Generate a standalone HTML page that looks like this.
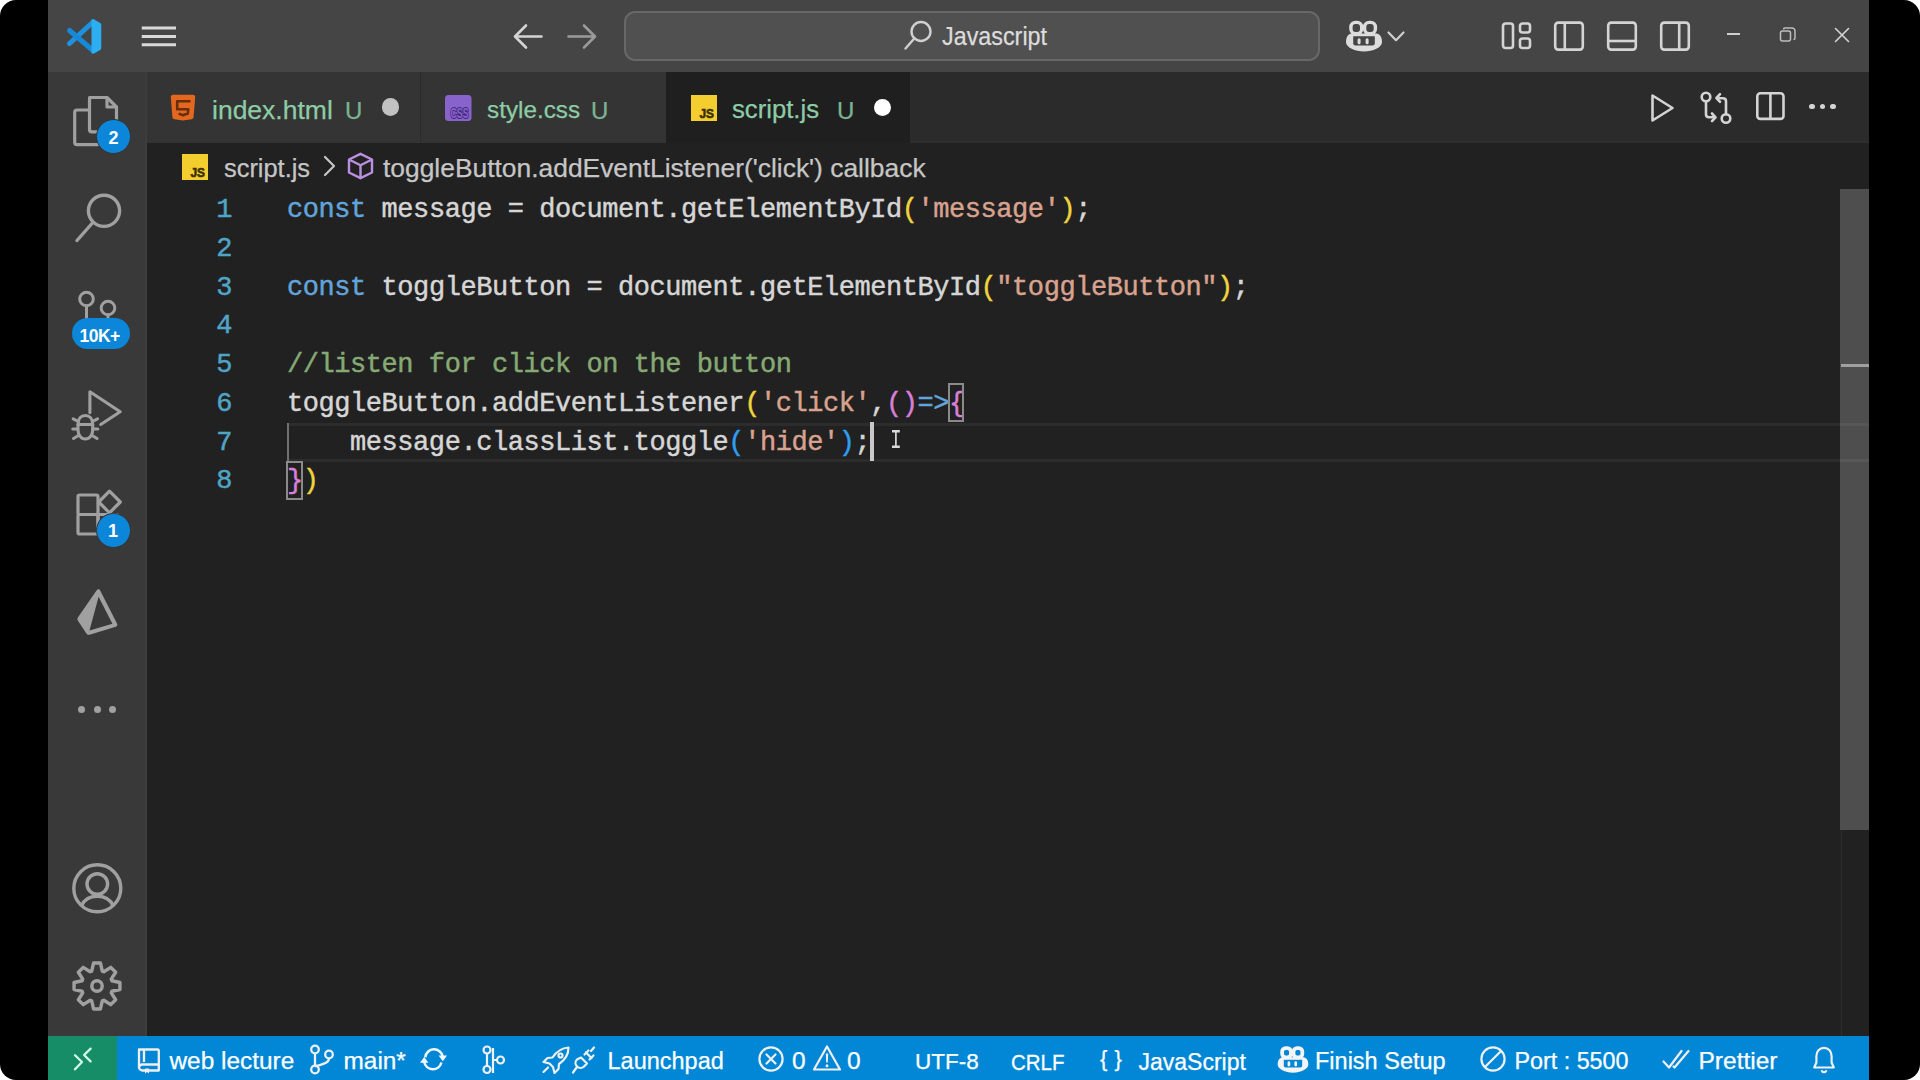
<!DOCTYPE html><html><head><meta charset="utf-8"><style>
*{margin:0;padding:0;box-sizing:border-box}
html,body{width:1920px;height:1080px;overflow:hidden;background:#fff}
body{position:relative;font-family:"Liberation Sans",sans-serif}
.frame{position:absolute;left:0;top:0;width:1920px;height:1080px;background:#000;border-radius:16px;overflow:hidden}
.abs{position:absolute}
.t{position:absolute;white-space:pre;line-height:1}
svg{position:absolute;overflow:visible}
#title{left:48px;top:0;width:1821px;height:72px;background:#454545}
#act{left:48px;top:72px;width:99px;height:964px;background:#393939;border-right:2px solid #3d3d3d}
#tabs{left:147px;top:72px;width:1722px;height:71px;background:#2b2b2b}
#crumb{left:147px;top:143px;width:1722px;height:46px;background:#212121}
#editor{left:147px;top:189px;width:1722px;height:847px;background:#212121}
#status{left:48px;top:1036px;width:1821px;height:44px;background:#0287d6}
#remote{left:48px;top:1036px;width:69px;height:44px;background:#178d67}
.mono{font-family:"Liberation Mono",monospace;font-size:27px;letter-spacing:-0.44px;-webkit-text-stroke:0.45px currentColor}
.ln{position:absolute;left:147px;width:85px;text-align:right;color:#50a5c6;white-space:pre;line-height:38.75px;height:38.75px}
.cl{position:absolute;left:287px;color:#d6d6d6;white-space:pre;line-height:38.75px;height:38.75px}
.kw{color:#62a4dc}.str{color:#d9a28f}.cm{color:#86aa74}.y{color:#f0d43e}.p{color:#d87fd8}.b{color:#2f9ef0}
</style></head><body><div class="frame"><div id="title" class="abs"></div><div id="act" class="abs"></div><div id="tabs" class="abs"></div><div id="crumb" class="abs"></div><div id="editor" class="abs"></div><div id="status" class="abs"></div><div id="remote" class="abs"></div><svg style="left:60px;top:14px" width="46" height="44" viewBox="60 14 46 44"><g stroke-linecap="round"><line x1="69.5" y1="43.5" x2="93" y2="22" stroke="#1d93e0" stroke-width="5"/><line x1="69.5" y1="30.5" x2="93" y2="50.5" stroke="#168ad8" stroke-width="5"/></g><path fill="#2eaef2" d="M91.5 19.8c1-.6 2-.6 3 0l5.3 3c.9.5 1.5 1.3 1.5 2.4v22.6c0 1.1-.6 1.9-1.5 2.4l-5.3 3c-1 .6-2 .6-3 0z"/></svg><svg style="left:141px;top:26px" width="36" height="22" viewBox="0 0 36 22"><g stroke="#d9d9d9" stroke-width="3"><line x1="0.75" y1="2.1" x2="35" y2="2.1"/><line x1="0.75" y1="10.5" x2="35" y2="10.5"/><line x1="0.75" y1="18.8" x2="35" y2="18.8"/></g></svg><svg style="left:512px;top:23px" width="32" height="28" viewBox="0 0 32 28"><g fill="none" stroke="#d4d4d4" stroke-width="2.6" stroke-linecap="round" stroke-linejoin="round"><path d="M14 2.5 3 13.5 14 24.5M3.5 13.5h26"/></g></svg><svg style="left:566px;top:23px" width="32" height="28" viewBox="0 0 32 28"><g fill="none" stroke="#9a9a9a" stroke-width="2.6" stroke-linecap="round" stroke-linejoin="round"><path d="M18 2.5 29 13.5 18 24.5M28.5 13.5h-26"/></g></svg><div class="abs" style="left:624px;top:10.8px;width:696px;height:50px;border-radius:11px;background:#505050;border:2px solid #686868"></div><svg style="left:903px;top:20px" width="30" height="31" viewBox="0 0 30 31"><g fill="none" stroke="#d0d0d0" stroke-width="2.4" stroke-linecap="round"><circle cx="18" cy="11.5" r="9.5"/><path d="M11.3 18.5 2.5 28.5"/></g></svg><div class="t" style="left:942px;top:24.41px;font-size:25.5px;color:#dcdcdc;font-family:'Liberation Sans',sans-serif;letter-spacing:0px;transform:scaleX(0.915);transform-origin:0 0;-webkit-text-stroke:0.25px #dcdcdc;">Javascript</div><svg style="left:1344px;top:18px" width="40" height="36" viewBox="0 0 40 36"><path fill="#dcdcdc" d="M2 24C2 19 4 16.5 7 15.5H33C36 16.5 38 19 38 24C38 29.5 29 33.5 20 33.5S2 29.5 2 24Z"/><path fill="#454545" d="M9.2 18.2H30.8V25.5C30.8 26.8 29.8 27.5 28.5 27.5H11.5C10.2 27.5 9.2 26.8 9.2 25.5Z"/><g fill="none" stroke="#dcdcdc" stroke-width="3.4"><rect x="6.9" y="4.4" width="10.8" height="11.2" rx="4.6"/><rect x="20.6" y="4.4" width="10.8" height="11.2" rx="4.6"/></g><g fill="#dcdcdc"><rect x="13.6" y="20.2" width="3" height="6" rx="1.5"/><rect x="21.6" y="20.2" width="3" height="6" rx="1.5"/></g></svg><svg style="left:1386px;top:30px" width="20" height="14" viewBox="0 0 20 14"><path d="M2.5 2.5l7.5 7.7 7.5-7.7" fill="none" stroke="#cfcfcf" stroke-width="2.2" stroke-linecap="round" stroke-linejoin="round"/></svg><svg style="left:1501px;top:21px" width="32" height="30" viewBox="0 0 32 30"><g fill="none" stroke="#d4d4d4" stroke-width="2.6" stroke-linejoin="round"><rect x="2" y="2.5" width="10" height="24.5" rx="2.5"/><rect x="19" y="2.5" width="10" height="9" rx="2.5"/><rect x="19" y="17.5" width="10" height="9.5" rx="2.5"/></g></svg><svg style="left:1552px;top:20px" width="34" height="32" viewBox="0 0 34 32"><g fill="none" stroke="#d4d4d4" stroke-width="2.6"><rect x="3.2" y="2.6" width="27.6" height="27" rx="3"/><line x1="12.8" y1="2.6" x2="12.8" y2="29.6"/></g></svg><svg style="left:1605px;top:20px" width="34" height="32" viewBox="0 0 34 32"><g fill="none" stroke="#d4d4d4" stroke-width="2.6"><rect x="3.2" y="2.6" width="27.6" height="27" rx="3"/><line x1="3.2" y1="21" x2="30.8" y2="21"/></g></svg><svg style="left:1658px;top:20px" width="34" height="32" viewBox="0 0 34 32"><g fill="none" stroke="#d4d4d4" stroke-width="2.6"><rect x="3.2" y="2.6" width="27.6" height="27" rx="3"/><line x1="21.2" y1="2.6" x2="21.2" y2="29.6"/></g></svg><div class="abs" style="left:1727px;top:33px;width:13px;height:1.6px;background:#cfcfcf"></div><svg style="left:1779px;top:27px" width="18" height="16" viewBox="0 0 18 16"><g fill="none" stroke="#bdbdbd" stroke-width="1.5"><rect x="1.5" y="4" width="10" height="10" rx="2"/><path d="M4.5 2.5c0-1 .6-1.5 1.5-1.5h7c1.6 0 3 1.4 3 3v7c0 .9-.5 1.5-1.5 1.5"/></g></svg><svg style="left:1834px;top:27px" width="16" height="16" viewBox="0 0 16 16"><g stroke="#d4d4d4" stroke-width="1.6" stroke-linecap="round"><line x1="1.5" y1="1.5" x2="14.5" y2="14.5"/><line x1="14.5" y1="1.5" x2="1.5" y2="14.5"/></g></svg><div class="abs" style="left:147px;top:72px;width:273px;height:71px;background:#343434"></div><div class="abs" style="left:420px;top:72px;width:246px;height:71px;background:#343434;border-left:1.5px solid #2c2c2c"></div><div class="abs" style="left:666px;top:72px;width:244px;height:71px;background:#1f1f1f"></div><div class="abs" style="left:910px;top:141px;width:959px;height:2px;background:#2e2e2e"></div><svg style="left:170px;top:93.5px" width="26" height="27" viewBox="0 0 26 27"><path fill="#e2681f" d="M3 .8h20c1.4 0 2.3 1 2.2 2.3L23.6 23c-.1 1.2-.9 2-2 2.3L13 26.5l-8.6-1.2c-1.1-.3-1.9-1.1-2-2.3L.8 3.1C.7 1.8 1.6.8 3 .8z"/><path fill="none" stroke="#6a2c0c" stroke-width="2.6" stroke-linejoin="round" d="M20.5 7.3H7.2V15.3H18.3L17.8 19.6 13 21.3 8.6 19.6"/></svg><div class="t" style="left:212px;top:96.57px;font-size:26.5px;color:#8ccca6;font-family:'Liberation Sans',sans-serif;letter-spacing:0px;-webkit-text-stroke:0.25px #8ccca6;">index.html</div><div class="t" style="left:345px;top:98.68px;font-size:24px;color:#7cb391;font-family:'Liberation Sans',sans-serif;letter-spacing:0px;-webkit-text-stroke:0.25px #7cb391;">U</div><div class="abs" style="left:381.5px;top:98px;width:17.5px;height:17.5px;border-radius:50%;background:#c2c2c2"></div><svg style="left:445px;top:94.5px" width="27" height="26" viewBox="0 0 27 26"><rect x="0" y="0" width="26.5" height="26" rx="3.5" fill="#8963cc"/><text x="5.5" y="22.5" font-family="Liberation Sans" font-size="14.5" font-weight="bold" fill="#8963cc" stroke="#452a7e" stroke-width="2.2" paint-order="stroke" textLength="18" lengthAdjust="spacingAndGlyphs">CSS</text></svg><div class="t" style="left:487px;top:98.43px;font-size:24.3px;color:#8ccca6;font-family:'Liberation Sans',sans-serif;letter-spacing:0px;-webkit-text-stroke:0.25px #8ccca6;">style.css</div><div class="t" style="left:591px;top:98.68px;font-size:24px;color:#7cb391;font-family:'Liberation Sans',sans-serif;letter-spacing:0px;-webkit-text-stroke:0.25px #7cb391;">U</div><svg style="left:691px;top:94.5px" width="26" height="26" viewBox="0 0 26 26"><rect width="26" height="26" fill="#f4cd2e"/><text x="8.5" y="22.6" font-family="Liberation Sans" font-size="13" font-weight="bold" fill="#3a3000" stroke="#3a3000" stroke-width="0.6" textLength="14.5" lengthAdjust="spacingAndGlyphs">JS</text></svg><div class="t" style="left:732px;top:97.24px;font-size:25.7px;color:#8ccca6;font-family:'Liberation Sans',sans-serif;letter-spacing:0px;-webkit-text-stroke:0.25px #8ccca6;">script.js</div><div class="t" style="left:837px;top:98.68px;font-size:24px;color:#7cb391;font-family:'Liberation Sans',sans-serif;letter-spacing:0px;-webkit-text-stroke:0.25px #7cb391;">U</div><div class="abs" style="left:873.5px;top:98.5px;width:17.5px;height:17.5px;border-radius:50%;background:#ffffff"></div><svg style="left:1650px;top:93px" width="26" height="30" viewBox="0 0 26 30"><path d="M2.5 2.5v25l20-12.5z" fill="none" stroke="#d4d4d4" stroke-width="2.6" stroke-linejoin="round"/></svg><svg style="left:1700px;top:91px" width="33" height="34" viewBox="0 0 33 34"><g fill="none" stroke="#d4d4d4" stroke-width="2.6" stroke-linecap="round" stroke-linejoin="round"><circle cx="6" cy="6" r="4.3"/><circle cx="26" cy="27.5" r="4.3"/><path d="M6 10.3v13c0 2 1 3 3 3h6"/><path d="M12 22.5l3.5 3.8-3.5 3.8"/><path d="M26 23.2v-13c0-2-1-3-3-3h-6"/><path d="M20 3.2l-3.5 3.8 3.5 3.8"/></g></svg><svg style="left:1756px;top:92px" width="29" height="29" viewBox="0 0 29 29"><g fill="none" stroke="#d4d4d4" stroke-width="2.6"><rect x="1.3" y="1.3" width="26.2" height="25.6" rx="3"/><line x1="14.4" y1="1.3" x2="14.4" y2="27"/></g></svg><div class="abs" style="left:1809.4px;top:104.2px;width:5.2px;height:5.2px;border-radius:50%;background:#d4d4d4"></div><div class="abs" style="left:1819.9px;top:104.2px;width:5.2px;height:5.2px;border-radius:50%;background:#d4d4d4"></div><div class="abs" style="left:1830.4px;top:104.2px;width:5.2px;height:5.2px;border-radius:50%;background:#d4d4d4"></div><svg style="left:182px;top:153.5px" width="26" height="26" viewBox="0 0 26 26"><rect width="26" height="26" fill="#f4cd2e"/><text x="8.5" y="22.6" font-family="Liberation Sans" font-size="13" font-weight="bold" fill="#3a3000" stroke="#3a3000" stroke-width="0.6" textLength="14.5" lengthAdjust="spacingAndGlyphs">JS</text></svg><div class="t" style="left:224px;top:155.50px;font-size:25.4px;color:#c6c6c6;font-family:'Liberation Sans',sans-serif;letter-spacing:0px;-webkit-text-stroke:0.25px #c6c6c6;">script.js</div><svg style="left:321.5px;top:153.5px" width="16" height="24" viewBox="0 0 16 24"><path d="M3 3l9 9-9 9" fill="none" stroke="#c6c6c6" stroke-width="2.2" stroke-linecap="round" stroke-linejoin="round"/></svg><svg style="left:347px;top:152px" width="27" height="28" viewBox="0 0 27 28"><g fill="none" stroke="#bb90e2" stroke-width="2.4" stroke-linejoin="round"><path d="M13.5 1.8 25 7.5v13L13.5 26.2 2 20.5v-13z"/><path d="M2 7.5l11.5 5.8L25 7.5M13.5 13.3v12.9"/></g></svg><div class="t" style="left:383px;top:154.65px;font-size:26.4px;color:#c6c6c6;font-family:'Liberation Sans',sans-serif;letter-spacing:0px;-webkit-text-stroke:0.25px #c6c6c6;">toggleButton.addEventListener(&#x27;click&#x27;) callback</div><svg style="left:66px;top:88px" width="60" height="64" viewBox="0 0 60 64"><g fill="none" stroke="#a0a0a0" stroke-width="3.2" stroke-linejoin="round"><path d="M23.5 9.5h17.5l9.5 9.5v22.5c0 1.4-1 2.3-2.3 2.3H25.8c-1.4 0-2.3-1-2.3-2.3V11.8c0-1.4 1-2.3 2.3-2.3z"/><path d="M41 9.5V19h9.5"/><path d="M23.5 22H11c-1.4 0-2.3 1-2.3 2.3v30c0 1.4 1 2.3 2.3 2.3h20c1.4 0 2.3-1 2.3-2.3V44"/></g></svg><div class="abs" style="left:96px;top:119.2px;width:35px;height:35px;border-radius:50%;background:#0c86d8;border:1.6px solid #333333"></div><div class="t" style="left:108.5px;top:129.26px;font-size:18px;color:#ffffff;font-family:'Liberation Sans',sans-serif;letter-spacing:0px;font-weight:bold">2</div><svg style="left:72px;top:188px" width="52" height="58" viewBox="0 0 52 58"><g fill="none" stroke="#a0a0a0" stroke-width="3.4" stroke-linecap="round"><circle cx="32" cy="22.8" r="15.6"/><path d="M20.8 34.5 5 52.5"/></g></svg><svg style="left:74px;top:288px" width="46" height="36" viewBox="0 0 46 36"><g fill="none" stroke="#a0a0a0" stroke-width="3" stroke-linecap="round"><circle cx="12.5" cy="11" r="6.8"/><circle cx="34" cy="20" r="6.8"/><path d="M12.5 17.8V34"/><path d="M34 26.8V34"/></g></svg><div class="abs" style="left:71.5px;top:317.5px;width:58px;height:31.5px;border-radius:16px;background:#0c86d8"></div><div class="t" style="left:79.5px;top:327.69px;font-size:17.5px;color:#ffffff;font-family:'Liberation Sans',sans-serif;letter-spacing:-0.5px;font-weight:bold">10K+</div><svg style="left:66px;top:384px" width="60" height="60" viewBox="0 0 60 60"><g fill="none" stroke="#a0a0a0" stroke-width="3.1" stroke-linecap="round" stroke-linejoin="round"><path d="M23.9 28.6V7.8L54.2 27.8 34.7 40.5"/><path d="M12 40.5C12 34.5 15 31.5 19.3 31.5S26.7 34.5 26.7 40.5V46C26.7 51 23.5 55 19.3 55S12 51 12 46Z"/><path d="M12 40.5H26.7"/><path d="M12.3 37.5 7.2 34.8M11.8 45H6.8M12.5 51.5 7.5 54.5M26.4 37.5l5.1-2.7M26.8 45h5M26.1 51.5l5 3"/></g></svg><svg style="left:74px;top:488px" width="48" height="50" viewBox="0 0 48 50"><g fill="none" stroke="#a0a0a0" stroke-width="3.2" stroke-linejoin="round"><rect x="4" y="7" width="20" height="19.5" rx="1.5"/><rect x="4" y="26.5" width="20" height="19.5" rx="1.5"/><rect x="24" y="26.5" width="20" height="19.5" rx="1.5"/><path d="M35.5 3.2l10.8 10.8-10.8 10.8-10.8-10.8z"/></g></svg><div class="abs" style="left:96px;top:512.5px;width:35px;height:35px;border-radius:50%;background:#0c86d8;border:1.6px solid #333333"></div><div class="t" style="left:108px;top:522.26px;font-size:18px;color:#ffffff;font-family:'Liberation Sans',sans-serif;letter-spacing:0px;font-weight:bold">1</div><svg style="left:74px;top:588px" width="48" height="52" viewBox="0 0 48 52"><path fill="#a0a0a0" d="M22.5 2.5c1-1.6 3-1.5 3.8.2l16.8 33c.6 1.2 0 2.7-1.3 3.1L15.6 46.7c-1.3.4-2.6-.2-3.2-1.3L3.8 32.6c-.6-1-.5-2.2.1-3.1zM24.6 8.8 15.5 42.5l22.9-6.8z" fill-rule="evenodd"/></svg><div class="abs" style="left:78.3px;top:706.3px;width:7px;height:7px;border-radius:50%;background:#a0a0a0"></div><div class="abs" style="left:93.7px;top:706.3px;width:7px;height:7px;border-radius:50%;background:#a0a0a0"></div><div class="abs" style="left:109.1px;top:706.3px;width:7px;height:7px;border-radius:50%;background:#a0a0a0"></div><svg style="left:70px;top:861px" width="54" height="54" viewBox="0 0 54 54"><g fill="none" stroke="#a0a0a0" stroke-width="3.4"><circle cx="27.3" cy="27.3" r="23.5"/><circle cx="27.3" cy="23" r="10.3"/><path d="M11.5 45c2.5-6.5 8.5-9.8 15.8-9.8s13.3 3.3 15.8 9.8"/></g></svg><svg style="left:70px;top:959px" width="54" height="54" viewBox="0 0 54 54"><g fill="none" stroke="#a0a0a0" stroke-width="3.4" stroke-linejoin="round"><path d="M21.73 12.10 L23.53 4.06 L30.47 4.06 L32.27 12.10 L33.81 12.74 L40.77 8.33 L45.67 13.23 L41.26 20.19 L41.90 21.73 L49.94 23.53 L49.94 30.47 L41.90 32.27 L41.26 33.81 L45.67 40.77 L40.77 45.67 L33.81 41.26 L32.27 41.90 L30.47 49.94 L23.53 49.94 L21.73 41.90 L20.19 41.26 L13.23 45.67 L8.33 40.77 L12.74 33.81 L12.10 32.27 L4.06 30.47 L4.06 23.53 L12.10 21.73 L12.74 20.19 L8.33 13.23 L13.23 8.33 L20.19 12.74Z"/><circle cx="27" cy="27" r="5.2"/></g></svg><svg style="left:71px;top:1046px" width="24" height="26" viewBox="0 0 24 26"><g fill="none" stroke="#d2fbe6" stroke-width="2.3" stroke-linecap="round" stroke-linejoin="round"><path d="M4 9.2l7 6.8-7 7.3"/><path d="M19.6 2.6l-6.5 6.4 6.5 6.4"/></g></svg><svg style="left:136px;top:1047px" width="26" height="28" viewBox="0 0 26 28"><g fill="none" stroke="#f0f0f0" stroke-width="2.3" stroke-linejoin="round"><path d="M3 2.5h18.5c.8 0 1.3.5 1.3 1.3V23.5H6.5c-1.8 0-3.5-1.5-3.5-3.3z"/><path d="M3 20.5c0-1.7 1.5-3 3.2-3h16.6"/><path d="M8 3v12"/></g><path d="M9 21.5v5l2-1.5 2 1.5v-5" fill="#f0f0f0"/></svg><div class="t" style="left:169.5px;top:1049.35px;font-size:24.4px;color:#ffffff;font-family:'Liberation Sans',sans-serif;letter-spacing:0px;-webkit-text-stroke:0.25px #ffffff;">web lecture</div><svg style="left:309px;top:1044px" width="26" height="31" viewBox="0 0 26 31"><g fill="none" stroke="#f0f0f0" stroke-width="2.3"><circle cx="6" cy="5.5" r="3.8"/><circle cx="6" cy="25.5" r="3.8"/><circle cx="20" cy="10.5" r="3.8"/><path d="M6 9.3v12.4M20 14.3c0 5-6 5.5-14 8.2"/></g></svg><div class="t" style="left:343.5px;top:1049.35px;font-size:24.4px;color:#ffffff;font-family:'Liberation Sans',sans-serif;letter-spacing:0px;-webkit-text-stroke:0.25px #ffffff;">main*</div><svg style="left:417px;top:1046px" width="32" height="28" viewBox="0 0 32 28"><g fill="none" stroke="#f0f8ff" stroke-width="2.5"><path d="M8.3 11.3A8.8 8.8 0 0 1 25.7 10.5"/><path d="M24.4 16.5A8.8 8.8 0 0 1 7.2 16"/></g><g fill="#f0f8ff"><path d="M21.6 9.4h8.4l-4.2 5.8z"/><path d="M3 16.8h8.4L7.2 11z"/></g></svg><svg style="left:481px;top:1045px" width="26" height="30" viewBox="0 0 26 30"><g fill="none" stroke="#f0f0f0" stroke-width="2.2"><circle cx="6" cy="5" r="3.5"/><circle cx="6" cy="24.5" r="3.5"/><circle cx="19.5" cy="15" r="3.5"/><path d="M6 8.5v12.5M12 3v25M16 15h-4"/></g></svg><svg style="left:541px;top:1045px" width="30" height="30" viewBox="0 0 30 30"><g fill="none" stroke="#f0f0f0" stroke-width="2.2" stroke-linejoin="round" stroke-linecap="round"><path d="M27.5 2.5c-7 .5-12 4-16 10l-5 .5-4 4 6 1.5 3.5 3.5 1.5 6 4-4 .5-5c6-4 9.5-9 9.5-16.5z"/><circle cx="19.5" cy="10.5" r="2"/><path d="M7 22.5l-4.5 4.5"/></g></svg><svg style="left:571px;top:1045px" width="28" height="30" viewBox="0 0 28 30"><g fill="none" stroke="#f0f0f0" stroke-width="2.2" stroke-linecap="round" stroke-linejoin="round"><path d="M10 12.5l6 6-3 3c-2 2-5 2-7 0s-2-5 0-7z"/><path d="M6 22L2 27.5"/><path d="M13.5 9.5l4-4M18.5 14.5l4-4"/><path d="M15 7.5l5.5 5.5"/><path d="M20 6l3-3.5"/></g></svg><div class="t" style="left:607.5px;top:1050.11px;font-size:23.5px;color:#ffffff;font-family:'Liberation Sans',sans-serif;letter-spacing:0px;-webkit-text-stroke:0.25px #ffffff;">Launchpad</div><svg style="left:757px;top:1045px" width="28" height="28" viewBox="0 0 28 28"><g fill="none" stroke="#f0f0f0" stroke-width="2.2" stroke-linecap="round"><circle cx="14" cy="14" r="11.6"/><path d="M9.5 9.5l9 9M18.5 9.5l-9 9"/></g></svg><div class="t" style="left:792px;top:1049.26px;font-size:24.5px;color:#ffffff;font-family:'Liberation Sans',sans-serif;letter-spacing:0px;-webkit-text-stroke:0.25px #ffffff;">0</div><svg style="left:812px;top:1044px" width="30" height="28" viewBox="0 0 30 28"><g fill="none" stroke="#f0f0f0" stroke-width="2.2" stroke-linejoin="round"><path d="M15 2.5 28 25.5H2z"/></g><path d="M13.8 9.5h2.4l-.4 9h-1.6z M15 20.2a1.5 1.5 0 1 1 0 3 1.5 1.5 0 0 1 0-3z" fill="#f0f0f0"/></svg><div class="t" style="left:847px;top:1049.26px;font-size:24.5px;color:#ffffff;font-family:'Liberation Sans',sans-serif;letter-spacing:0px;-webkit-text-stroke:0.25px #ffffff;">0</div><div class="t" style="left:915px;top:1050.95px;font-size:22.5px;color:#ffffff;font-family:'Liberation Sans',sans-serif;letter-spacing:0px;-webkit-text-stroke:0.25px #ffffff;">UTF-8</div><div class="t" style="left:1011px;top:1052.65px;font-size:20.5px;color:#ffffff;font-family:'Liberation Sans',sans-serif;letter-spacing:0px;-webkit-text-stroke:0.25px #ffffff;transform:scaleY(1.1);transform-origin:0 100%">CRLF</div><div class="t" style="left:1100px;top:1047.88px;font-size:22px;color:#ffffff;font-family:'Liberation Sans',sans-serif;letter-spacing:0.5px;-webkit-text-stroke:0.25px #ffffff;">{ }</div><div class="t" style="left:1138.5px;top:1050.53px;font-size:23.0px;color:#ffffff;font-family:'Liberation Sans',sans-serif;letter-spacing:0px;-webkit-text-stroke:0.25px #ffffff;">JavaScript</div><svg style="left:1276px;top:1044px" width="34" height="31" viewBox="0 0 40 36"><path fill="#f4f4f4" d="M2 24C2 19 4 16.5 7 15.5H33C36 16.5 38 19 38 24C38 29.5 29 33.5 20 33.5S2 29.5 2 24Z"/><path fill="#0287d6" d="M9.2 18.2H30.8V25.5C30.8 26.8 29.8 27.5 28.5 27.5H11.5C10.2 27.5 9.2 26.8 9.2 25.5Z"/><g fill="none" stroke="#f4f4f4" stroke-width="4.4"><rect x="7.2" y="4.6" width="10.4" height="10.8" rx="4.2"/><rect x="20.6" y="4.6" width="10.4" height="10.8" rx="4.2"/></g><g fill="#f4f4f4"><rect x="13.6" y="20.2" width="3.2" height="6" rx="1.6"/><rect x="21.6" y="20.2" width="3.2" height="6" rx="1.6"/></g></svg><div class="t" style="left:1315px;top:1050.11px;font-size:23.5px;color:#ffffff;font-family:'Liberation Sans',sans-serif;letter-spacing:0px;-webkit-text-stroke:0.25px #ffffff;">Finish Setup</div><svg style="left:1479px;top:1045px" width="28" height="28" viewBox="0 0 28 28"><g fill="none" stroke="#f0f0f0" stroke-width="2.2" stroke-linecap="round"><circle cx="14" cy="14" r="11.6"/><path d="M21.8 6.2 6.2 21.8"/></g></svg><div class="t" style="left:1514.5px;top:1050.28px;font-size:23.3px;color:#ffffff;font-family:'Liberation Sans',sans-serif;letter-spacing:0px;-webkit-text-stroke:0.25px #ffffff;">Port : 5500</div><svg style="left:1661px;top:1048px" width="30" height="24" viewBox="0 0 30 24"><g fill="none" stroke="#f0f0f0" stroke-width="2.2" stroke-linecap="round" stroke-linejoin="round"><path d="M2.5 13.5 8 19.5 20.5 3"/><path d="M12.5 18.5l1 1L27.5 3"/></g></svg><div class="t" style="left:1698.5px;top:1049.26px;font-size:24.5px;color:#ffffff;font-family:'Liberation Sans',sans-serif;letter-spacing:0px;-webkit-text-stroke:0.25px #ffffff;">Prettier</div><svg style="left:1811px;top:1045px" width="26" height="30" viewBox="0 0 26 30"><g fill="none" stroke="#f0f0f0" stroke-width="2.2" stroke-linejoin="round"><path d="M13 2.8c-4.6 0-7.6 3.6-7.6 8.2v6.5L3.2 22.5h19.6l-2.2-5V11c0-4.6-3-8.2-7.6-8.2z"/><path d="M10.5 25.2c.4 1.3 1.3 2 2.5 2s2.1-.7 2.5-2"/></g></svg><div class="abs" style="left:1840px;top:189px;width:29px;height:641px;background:#4e4e4e"></div><div class="abs" style="left:1841px;top:364px;width:28px;height:2.5px;background:#a0a0a0"></div><div class="abs" style="left:1841px;top:830px;width:1.2px;height:206px;background:#2e2e2e"></div><div class="abs" style="left:287px;top:423.00px;width:1582px;height:38.75px;border-top:3px solid rgba(255,255,255,0.05);border-bottom:3px solid rgba(255,255,255,0.05)"></div><div class="ln mono" style="top:191.00px">1</div><div class="cl mono" style="top:191.00px"><span class="kw">const</span> message = document.getElementById<span class="y">(</span><span class="str">'message'</span><span class="y">)</span>;</div><div class="ln mono" style="top:229.75px">2</div><div class="cl mono" style="top:229.75px"></div><div class="ln mono" style="top:268.50px">3</div><div class="cl mono" style="top:268.50px"><span class="kw">const</span> toggleButton = document.getElementById<span class="y">(</span><span class="str">"toggleButton"</span><span class="y">)</span>;</div><div class="ln mono" style="top:307.25px">4</div><div class="cl mono" style="top:307.25px"></div><div class="ln mono" style="top:346.00px">5</div><div class="cl mono" style="top:346.00px"><span class="cm">//listen for click on the button</span></div><div class="ln mono" style="top:384.75px">6</div><div class="cl mono" style="top:384.75px">toggleButton.addEventListener<span class="y">(</span><span class="str">'click'</span>,<span class="p">()</span><span class="kw">=&gt;</span><span class="p">{</span></div><div class="ln mono" style="top:423.50px">7</div><div class="cl mono" style="top:423.50px">    message.classList.toggle<span class="b">(</span><span class="str">'hide'</span><span class="b">)</span>;</div><div class="ln mono" style="top:462.25px">8</div><div class="cl mono" style="top:462.25px"><span class="p">}</span><span class="y">)</span></div><div class="abs" style="left:286.5px;top:422.50px;width:2px;height:39.75px;background:#707070"></div><div class="abs" style="left:286px;top:461.25px;width:16.5px;height:38.5px;border:2px solid #8a8a8a"></div><div class="abs" style="left:947.5px;top:383.00px;width:16.5px;height:38.6px;border:2px solid #8a8a8a"></div><div class="abs" style="left:870px;top:422.00px;width:4px;height:39px;background:#c8c8c8"></div><svg style="left:890px;top:429px" width="12" height="20" viewBox="0 0 12 20"><g fill="none" stroke="#dadada"><path stroke-width="2.4" d="M2 2.2h7.8M2 17.8h7.8"/><path stroke-width="1.7" d="M5.9 2.2v15.6"/></g></svg></div></body></html>
